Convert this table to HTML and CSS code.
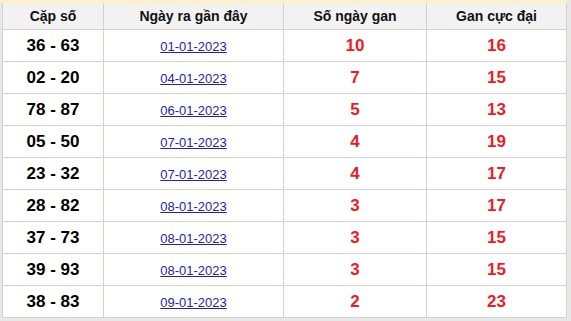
FILE: index.html
```html
<!DOCTYPE html>
<html lang="vi">
<head>
  <meta charset="UTF-8" />
  <meta name="viewport" content="width=device-width, initial-scale=1.0"/>
  <title>Thống kê lô gan</title>
  <link rel="stylesheet" href="styles.css">
</head>
<body>
  <div class="wrap">
    <table class="gan-table">
      <thead>
        <tr>
          <th class="col-pair">Cặp số</th>
          <th class="col-date">Ngày ra gần đây</th>
          <th class="col-days">Số ngày gan</th>
          <th class="col-max">Gan cực đại</th>
        </tr>
      </thead>
      <tbody>
        <tr><td class="pair">36 - 63</td><td><a href="#">01-01-2023</a></td><td class="red">10</td><td class="red">16</td></tr>
        <tr><td class="pair">02 - 20</td><td><a href="#">04-01-2023</a></td><td class="red">7</td><td class="red">15</td></tr>
        <tr><td class="pair">78 - 87</td><td><a href="#">06-01-2023</a></td><td class="red">5</td><td class="red">13</td></tr>
        <tr><td class="pair">05 - 50</td><td><a href="#">07-01-2023</a></td><td class="red">4</td><td class="red">19</td></tr>
        <tr><td class="pair">23 - 32</td><td><a href="#">07-01-2023</a></td><td class="red">4</td><td class="red">17</td></tr>
        <tr><td class="pair">28 - 82</td><td><a href="#">08-01-2023</a></td><td class="red">3</td><td class="red">17</td></tr>
        <tr><td class="pair">37 - 73</td><td><a href="#">08-01-2023</a></td><td class="red">3</td><td class="red">15</td></tr>
        <tr><td class="pair">39 - 93</td><td><a href="#">08-01-2023</a></td><td class="red">3</td><td class="red">15</td></tr>
        <tr><td class="pair">38 - 83</td><td><a href="#">09-01-2023</a></td><td class="red">2</td><td class="red">23</td></tr>
      </tbody>
    </table>
  </div>
</body>
</html>
```

FILE: styles.css
```css
body {
  margin: 0;
  background: #e8e8e8;
  font-family: "Liberation Sans", Arial, sans-serif;
  height: 321px;
  overflow: hidden;
}

.wrap {
  width: 565px;
  padding-left: 2px;
  border-top: 3px solid #fdf1c5;
}

.gan-table {
  width: 565px;
  border-collapse: collapse;
  table-layout: fixed;
  background: #fff;
}

.gan-table th,
.gan-table td {
  border: 1px solid #d9d1c9;
  text-align: center;
  padding: 0;
}

.gan-table th {
  background: #f2f2f2;
  color: #111;
  font-size: 14px;
  font-weight: bold;
  height: 26px;
  border-top: none;
}

.gan-table td {
  height: 31px;
}

.col-pair { width: 100px; }
.col-date { width: 179px; }
.col-days { width: 142px; }

.pair {
  font-size: 17px;
  font-weight: bold;
  color: #000;
}

.red {
  font-size: 17px;
  font-weight: bold;
  color: #ed1c24;
}

.gan-table a {
  font-size: 13px;
  color: #2424a8;
  text-decoration: underline;
}
```
